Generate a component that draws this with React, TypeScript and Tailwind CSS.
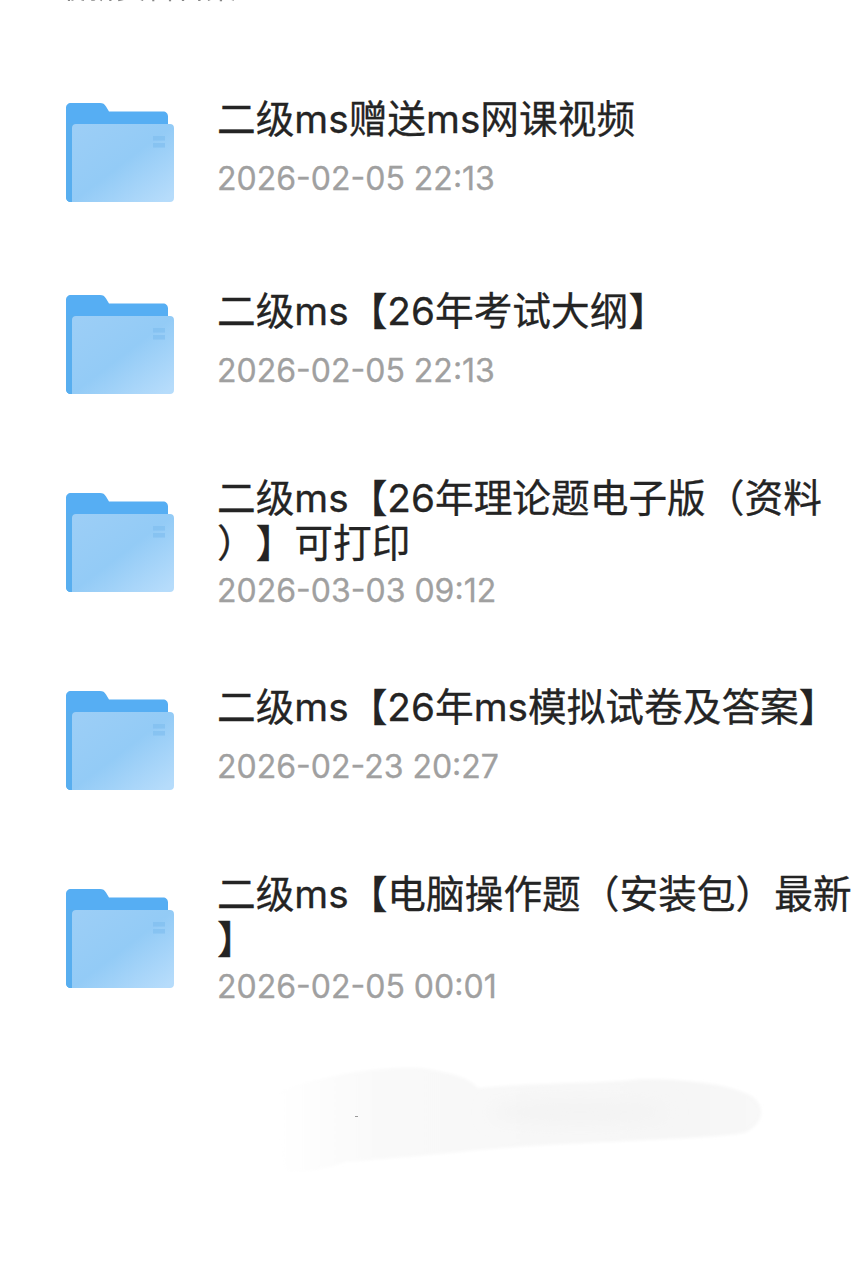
const FONT = '"Inter", "Noto Sans CJK SC", sans-serif';

function FolderIcon() {
  return (
    <svg width="108" height="99" viewBox="0 0 108 99" className="shrink-0 block">
      <defs>
        <linearGradient id="front" x1="0.05" y1="0.05" x2="0.95" y2="0.95">
          <stop offset="0" stopColor="#9ccef6" />
          <stop offset="0.5" stopColor="#93cbf6" />
          <stop offset="1" stopColor="#b6dcfb" />
        </linearGradient>
      </defs>
      <path
        d="M5 0H34C37 0 38.500 1 40 3.500L43 8.500H97C100 8.500 102 10.500 102 13.500V30H6V99H5C2 99 0 97 0 94V5C0 2 2 0 5 0Z"
        fill="#56aef3"
      />
      <path d="M0 20H8V99H5C2 99 0 97 0 94Z" fill="#58aeef" />
      <path
        d="M10 21H104C106.500 21 108 22.500 108 25V95C108 97.500 106.500 99 104 99H6V25C6 22.500 7.500 21 10 21Z"
        fill="url(#front)"
      />
      <rect x="87" y="33" width="12" height="4.500" fill="#7dbdef" opacity="0.6" />
      <rect x="87" y="40" width="12" height="4.500" fill="#7dbdef" opacity="0.6" />
    </svg>
  );
}

type Row = { lines: string[]; date: string };

const rows: Row[] = [
  { lines: ["二级ms赠送ms网课视频"], date: "2026-02-05 22:13" },
  { lines: ["二级ms【26年考试大纲】"], date: "2026-02-05 22:13" },
  { lines: ["二级ms【26年理论题电子版（资料", "）】可打印"], date: "2026-03-03 09:12" },
  { lines: ["二级ms【26年ms模拟试卷及答案】"], date: "2026-02-23 20:27" },
  { lines: ["二级ms【电脑操作题（安装包）最新", "】"], date: "2026-02-05 00:01" },
];

function FileRow({ row }: { row: Row }) {
  const three = row.lines.length > 1;
  return (
    <div className={`flex items-center pl-[66px] ${three ? "h-[204px]" : "h-[192px]"}`}>
      <FolderIcon />
      <div className={`ml-[43px] flex min-w-0 flex-1 flex-col ${three ? "gap-[3px] mt-[4px]" : "gap-[15px] -mt-[7px]"}`}>
        <div className="text-[38.7px] leading-[45px] text-[#242424] whitespace-nowrap [text-spacing-trim:space-all] [-webkit-text-stroke:0.3px_#242424]">
          {row.lines.map((l, i) => (
            <div key={i}>{l}</div>
          ))}
        </div>
        <div className="text-[32px] leading-[44px] text-[#a0a0a0] whitespace-nowrap [-webkit-text-stroke:0.3px_#a0a0a0]">{row.date}</div>
      </div>
    </div>
  );
}

export default function App() {
  return (
    <div className="h-[1276px] w-[867px] overflow-hidden bg-white" style={{ fontFamily: FONT }}>
      <div className="h-[56px] overflow-hidden">
        <div className="-mt-[28px] pl-[56px] text-[30px] leading-[30px] text-[#555555] opacity-70">最新资料合集</div>
      </div>
      {rows.map((r, i) => (
        <FileRow key={i} row={r} />
      ))}
      <svg width="867" height="236" viewBox="0 1040 867 236" className="block">
        <defs>
          <filter id="soft" x="-10%" y="-30%" width="120%" height="160%">
            <feGaussianBlur stdDeviation="1.500" />
          </filter>
          <filter id="soft2" x="-20%" y="-60%" width="140%" height="220%">
            <feGaussianBlur stdDeviation="9" />
          </filter>
          <linearGradient id="sm" x1="0" y1="0" x2="1" y2="0">
            <stop offset="0" stopColor="#ffffff" />
            <stop offset="0.1" stopColor="#fdfdfd" />
            <stop offset="0.22" stopColor="#f9f9f9" />
            <stop offset="0.85" stopColor="#f6f6f6" />
            <stop offset="1" stopColor="#f8f8f8" />
          </linearGradient>
        </defs>
        <path
          d="M265 1095C320 1075 380 1066 420 1068C450 1072 470 1078 478 1088C540 1082 600 1084 640 1079C690 1079 730 1085 750 1095C766 1105 766 1122 745 1133C700 1140 560 1142 480 1150C420 1156 370 1160 345 1162C320 1172 300 1172 285 1172C275 1130 265 1110 265 1095Z"
          fill="url(#sm)"
          filter="url(#soft)"
        />
        <ellipse cx="580" cy="1112" rx="90" ry="11" fill="#f3f3f3" filter="url(#soft2)" />
        <rect x="355" y="1116" width="3" height="1" fill="#9a9a9a" />
      </svg>
    </div>
  );
}
